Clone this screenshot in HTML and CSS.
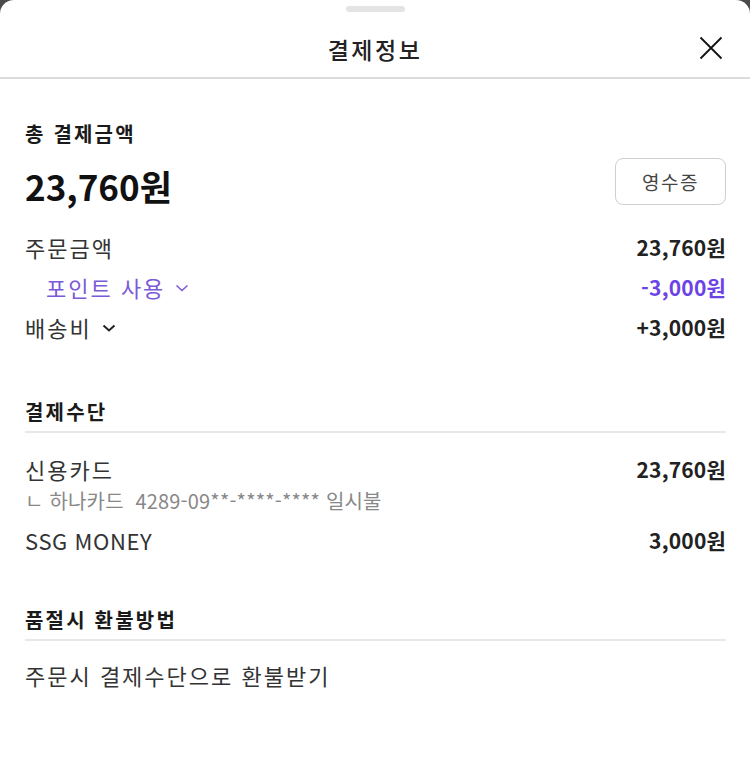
FILE: index.html
```html
<!DOCTYPE html>
<html lang="ko">
<head>
<meta charset="utf-8">
<title>결제정보</title>
<link rel="stylesheet" href="styles.css">
</head>
<body>
<div class="sheet">
  <div class="handle-wrap"><div class="handle"></div></div>
  <header class="header">
    <h1 class="title">결제정보</h1>
    <button class="close" aria-label="닫기">
      <svg width="24" height="24" viewBox="0 0 24 24"><path d="M1.5 1.5 L22.5 22.5 M22.5 1.5 L1.5 22.5" stroke="#111" stroke-width="1.8" fill="none"/></svg>
    </button>
  </header>
  <main class="content">
    <section class="total">
      <h2 class="sec-title">총 결제금액</h2>
      <div class="total-row">
        <div class="total-amount">23,760원</div>
        <button class="receipt">영수증</button>
      </div>
      <div class="row top">
        <span class="label">주문금액</span>
        <span class="value">23,760원</span>
      </div>
      <div class="row sub">
        <span class="label purple">포인트 사용<svg class="chev" width="14" height="10" viewBox="0 0 14 10"><path d="M1.5 2.5 L7 7.5 L12.5 2.5" stroke="currentColor" stroke-width="1.6" fill="none"/></svg></span>
        <span class="value purple-v">-3,000원</span>
      </div>
      <div class="row">
        <span class="label">배송비<svg class="chev dark" width="14" height="10" viewBox="0 0 14 10"><path d="M1.5 2.5 L7 7.5 L12.5 2.5" stroke="currentColor" stroke-width="2" fill="none"/></svg></span>
        <span class="value">+3,000원</span>
      </div>
    </section>

    <section class="block pay">
      <h2 class="sec-title lined">결제수단</h2>
      <div class="row first">
        <span class="label">신용카드</span>
        <span class="value">23,760원</span>
      </div>
      <div class="card-detail">ㄴ 하나카드&nbsp;&nbsp;4289-09**-****-**** 일시불</div>
      <div class="row">
        <span class="label latin">SSG MONEY</span>
        <span class="value">3,000원</span>
      </div>
    </section>

    <section class="block refund">
      <h2 class="sec-title lined">품절시 환불방법</h2>
      <div class="row first">
        <span class="label">주문시 결제수단으로 환불받기</span>
      </div>
    </section>
  </main>
</div>
</body>
</html>
```
FILE: styles.css
```css
* { box-sizing: border-box; }
html, body { margin: 0; padding: 0; }
body {
  background: #4a4a4a;
  font-family: "Noto Sans CJK KR", "Noto Sans", sans-serif;
  color: #222;
}
.sheet {
  background: #fff;
  border-radius: 14px 14px 0 0;
  min-height: 773px;
}
.handle-wrap {
  display: flex;
  justify-content: center;
  padding-top: 6px;
}
.handle {
  width: 59px;
  height: 6px;
  border-radius: 3px;
  background: #e4e4e4;
}
.header {
  position: relative;
  height: 67px;
  display: flex;
  align-items: center;
  justify-content: center;
  border-bottom: 2px solid #dcdcdc;
}
.title {
  margin: 9px 0 0;
  font-size: 23px;
  font-weight: 500;
  line-height: 1;
  letter-spacing: 2.5px;
  color: #222;
}
.close {
  position: absolute;
  right: 27px;
  top: 24px;
  border: 0;
  background: none;
  padding: 0;
  width: 24px;
  height: 24px;
  cursor: pointer;
}
.close svg { display: block; }
.content {
  padding: 0 24px 0 25px;
}
.total { padding-top: 42px; }
.sec-title {
  margin: 0;
  font-size: 20px;
  font-weight: 700;
  line-height: 26px;
  letter-spacing: 2.2px;
  color: #1a1a1a;
}
.total-row {
  display: flex;
  justify-content: space-between;
  align-items: center;
  margin-top: 19px;
  height: 40px;
}
.total-amount {
  font-size: 35px;
  font-weight: 700;
  line-height: 40px;
  color: #111;
}
.receipt {
  width: 111px;
  height: 47px;
  border: 1px solid #cfcfcf;
  border-radius: 8px;
  background: #fff;
  font-family: inherit;
  font-size: 19px;
  letter-spacing: 1.5px;
  color: #444;
  margin-top: -10px;
  padding: 0;
}
.row {
  display: flex;
  justify-content: space-between;
  align-items: center;
  height: 40px;
}
.row.top { margin-top: 21px; }
.label {
  font-size: 22px;
  line-height: 28px;
  letter-spacing: 2px;
  color: #333;
  display: inline-flex;
  align-items: center;
  gap: 10px;
}
.label.latin { letter-spacing: 0.6px; }
.value {
  font-size: 21px;
  font-weight: 700;
  line-height: 28px;
  letter-spacing: 0.2px;
  color: #222;
}
.sub .label { padding-left: 21px; }
.purple { color: #7a5ad6; }
.purple-v { color: #6b43e6; }
.chev { display: block; margin-top: 2px; }
.chev.dark { color: #222; }
.block.pay { padding-top: 52px; }
.block.refund { padding-top: 47px; }
.lined {
  padding-bottom: 6px;
  border-bottom: 2px solid #e8e8e8;
}
.row.first { margin-top: 14px; }
.pay .row.first { margin-top: 16px; }
.card-detail {
  font-size: 20px;
  line-height: 26px;
  letter-spacing: 0.2px;
  color: #888;
  margin-top: -1px;
  margin-bottom: 6px;
}
```
